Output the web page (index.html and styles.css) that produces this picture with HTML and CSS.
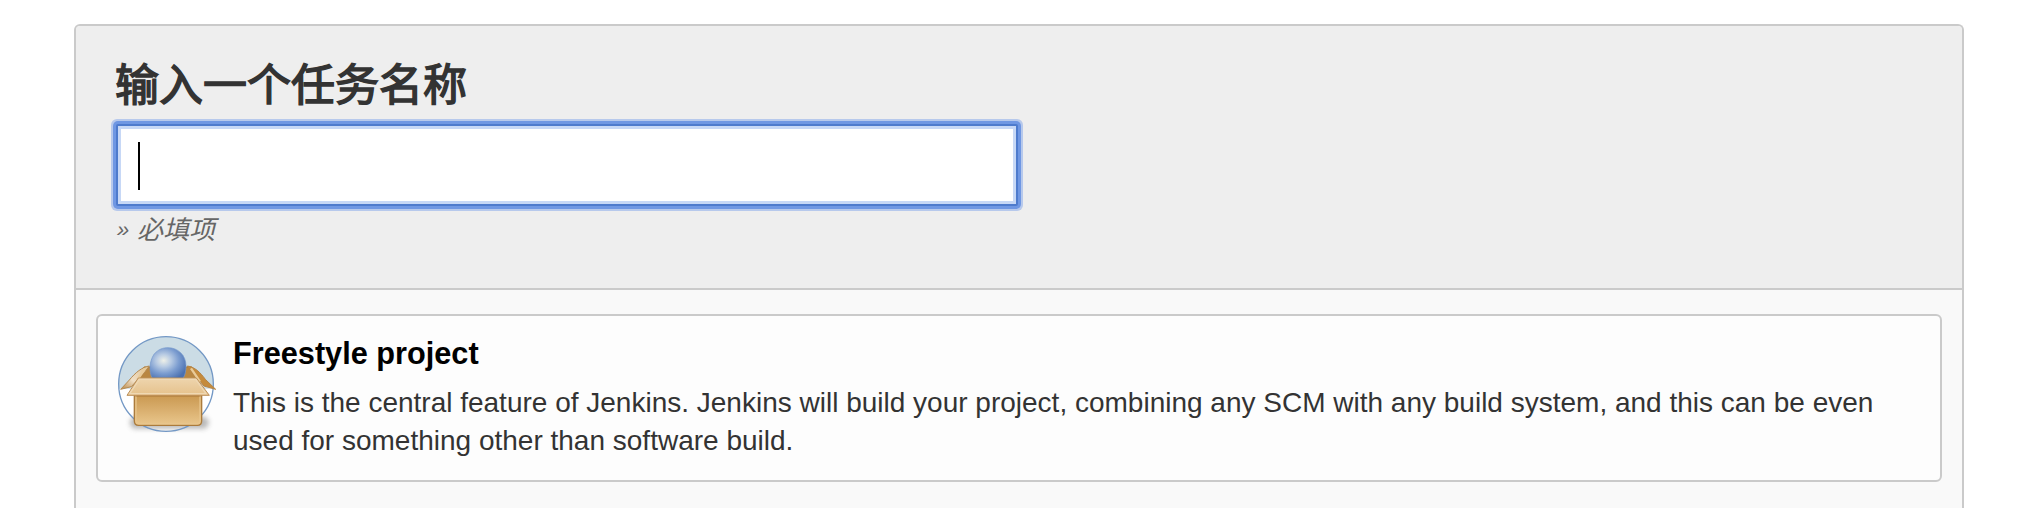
FILE: index.html
```html
<!DOCTYPE html>
<html lang="zh-CN">
<head>
<meta charset="utf-8">
<title>Jenkins</title>
<link rel="stylesheet" href="styles.css">
</head>
<body>
<main class="panel">
  <header class="panel-header">
    <label class="heading" for="name">输入一个任务名称</label>
    <div class="name-field" id="name" role="textbox"><span class="caret"></span></div>
    <div class="hint"><span class="hint-mark">»</span>必填项</div>
  </header>
  <section class="categories">
    <article class="item">
      <svg class="item-icon" viewBox="84 108 300 300">
        <defs>
          <linearGradient id="front" x1="0" y1="0" x2="0" y2="1"><stop offset="0" stop-color="#c8954b"/><stop offset=".25" stop-color="#cfa05b"/><stop offset="1" stop-color="#eac78d"/></linearGradient>
          <linearGradient id="flap" x1="0" y1="0" x2="0" y2="1"><stop offset="0" stop-color="#eed5ae"/><stop offset="1" stop-color="#e5c18b"/></linearGradient>
          <linearGradient id="left" x1="0" y1="1" x2="1" y2="0"><stop offset="0" stop-color="#b78542"/><stop offset=".4" stop-color="#f0dfc6"/><stop offset="1" stop-color="#dfc08d"/></linearGradient>
          <radialGradient id="ball" cx=".38" cy=".42" r=".68"><stop offset="0" stop-color="#eef0e8"/><stop offset=".3" stop-color="#b8cbe3"/><stop offset=".62" stop-color="#7c9dd0"/><stop offset="1" stop-color="#4a70b0"/></radialGradient>
          <filter id="soft" x="-20%" y="-50%" width="140%" height="200%"><feGaussianBlur stdDeviation="8"/></filter>
          <clipPath id="upper"><rect x="84" y="108" width="300" height="158"/></clipPath>
        </defs>
        <circle cx="228" cy="252" r="142" fill="#fff"/>
        <circle cx="228" cy="252" r="142" fill="#cbdce5" clip-path="url(#upper)"/>
        <rect x="120" y="350" width="236" height="36" rx="16" fill="#555" opacity=".4" filter="url(#soft)"/>
        <circle cx="228" cy="252" r="142" fill="none" stroke="#7398c5" stroke-width="4"/>
        <path d="M162 201H306L324 238H140Z" fill="#b98742" stroke="#a77838" stroke-width="3"/>
        <path d="M178 198C156 201 136 218 118 240L92 268L124 260L166 214Z" fill="url(#left)" stroke="#b58a50" stroke-width="3" stroke-linejoin="round"/>
        <path d="M292 198C314 201 330 216 346 238L377 268L342 258L306 216Z" fill="#c58b3c" stroke="#b58548" stroke-width="3" stroke-linejoin="round"/>
        <path d="M165 205L142 240M303 205L330 245" stroke="#e9cb99" stroke-width="7" fill="none"/>
        <path d="M187 235C176 214 178 184 192 163C205 147 220 143 234 143C263 143 288 165 288 197C288 212 286 225 279 235Z" fill="url(#ball)" stroke="#7497cb" stroke-width="2"/>
        <path d="M133 276H335V362Q335 376 322 376H146Q133 376 133 362Z" fill="url(#front)" stroke="#ab7b3c" stroke-width="4"/>
        <path d="M138 282V360Q138 371 148 371H320Q330 371 330 360V282" fill="none" stroke="#e8c58c" stroke-width="4"/>
        <path d="M145 234H319L358 286H111Z" fill="url(#flap)" stroke="#bd9059" stroke-width="3" stroke-linejoin="round"/>
        <path d="M119 281L148 238H317L348 281Z" fill="none" stroke="#efd8b3" stroke-width="4"/>
        <path d="M136 289H332" stroke="#a97537" stroke-width="3" opacity=".55"/>
      </svg>
      <div class="item-text">
        <h2 class="item-title">Freestyle project</h2>
        <p class="item-desc">This is the central feature of Jenkins. Jenkins will build your project, combining any SCM with any build system, and this can be even<br>used for something other than software build.</p>
      </div>
    </article>
  </section>
</main>
</body>
</html>
```
FILE: styles.css
```css
* { box-sizing: border-box; }

body {
  margin: 0;
  height: 508px;
  overflow: hidden;
  background: #fff;
  color: #333;
  font-family: "Liberation Sans", "Noto Sans CJK SC", sans-serif;
}

.panel {
  margin: 24px 76px 0 74px;
  height: 484px;
  border: 2px solid #cacaca;
  border-bottom: 0;
  border-radius: 6px 6px 0 0;
  background: #f9f9f9;
  overflow: hidden;
}

.panel-header {
  height: 264px;
  padding: 25px 40px 0;
  border-bottom: 2px solid #cacaca;
  background: #eee;
}

.heading {
  display: block;
  height: 73px;
  margin-left: -1px;
  font-family: "Noto Sans CJK SC", sans-serif;
  font-size: 44px;
  font-weight: 400;
  line-height: 62px;
  -webkit-text-stroke: 1.5px #333;
}

.name-field {
  display: flex;
  align-items: center;
  width: 902px;
  height: 82px;
  padding: 2px 0 0 20px;
  border: 2px solid #4e7bcd;
  border-radius: 2px;
  background: #fff;
  box-shadow: 0 0 0 3px #6f97e3, 0 0 0 5px #b7c9ec, inset 0 0 0 3px #c7d8f6;
}

.caret {
  width: 2px;
  height: 48px;
  background: #000;
}

.hint {
  display: flex;
  height: 44px;
  padding-left: 1px;
  color: #666;
  font-family: "Noto Sans CJK SC", sans-serif;
  font-size: 26px;
  font-style: italic;
  font-weight: 400;
  line-height: 43px;
}

.hint-mark {
  width: 20px;
  padding-top: 2px;
  font-family: "Liberation Sans", sans-serif;
  font-size: 22px;
}

.categories { padding: 24px 20px 0; }

.item {
  display: flex;
  height: 168px;
  padding: 20px;
  border: 2px solid #cacaca;
  border-radius: 6px;
  background: #fdfdfd;
}

.item-icon {
  flex: none;
  width: 100px;
  height: 100px;
}

.item-text {
  padding-left: 15px;
  white-space: nowrap;
}

.item-title {
  margin: 0;
  color: #000;
  font-size: 30.7px;
  line-height: 36px;
}

.item-desc {
  margin: 12px 0 0;
  font-size: 28px;
  line-height: 38px;
}
```
